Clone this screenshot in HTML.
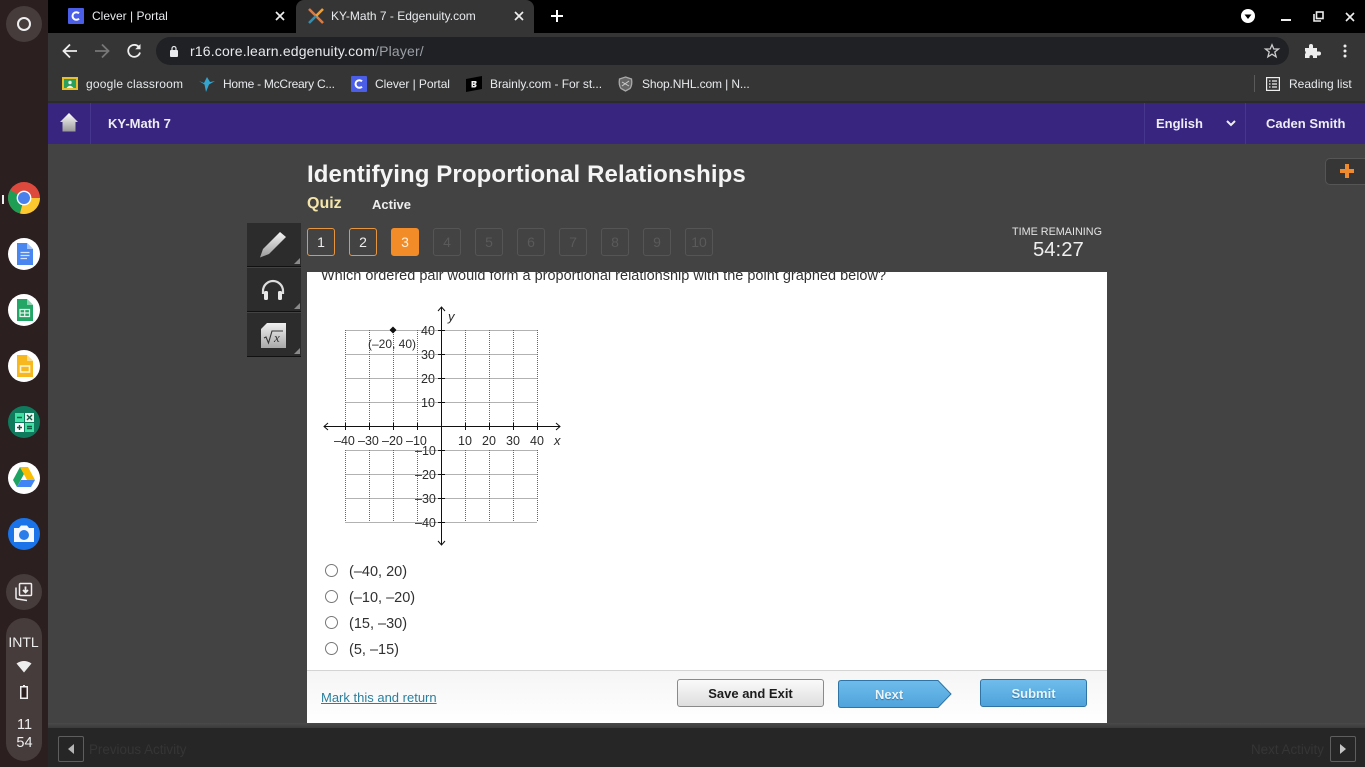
<!DOCTYPE html>
<html><head><meta charset="utf-8"><title>KY-Math 7 - Edgenuity.com</title>
<style>
html,body{margin:0;padding:0;width:1365px;height:767px;overflow:hidden;background:#434343;font-family:"Liberation Sans",sans-serif}
.a{position:absolute;white-space:nowrap}
svg{position:absolute;overflow:visible}
.t{font-size:12px;color:#e8eaed;top:77px;line-height:14px}
.n{position:absolute;top:228px;width:26px;height:26px;border:1px solid #555;border-radius:3px;text-align:center;line-height:26px;font-size:14px;color:#5a5a5a}
.on{border-color:#e8953f;color:#eee}
.opt{position:absolute;left:349px;font-size:14.5px;color:#303030;line-height:16px}
.rad{position:absolute;left:325px;width:11px;height:11px;border:1px solid #777;border-radius:50%;background:#fff}
.tool{position:absolute;left:247px;width:54px;height:43px;background:#2c2c2c;border-bottom:1px solid #111}
.tool:after{content:"";position:absolute;right:1px;bottom:2px;border-left:6px solid transparent;border-bottom:6px solid #8a8a8a}
</style></head><body>

<!-- shelf -->
<div class="a" style="left:0;top:0;width:48px;height:767px;background:#2b1f20"></div>
<div class="a" style="left:6px;top:6px;width:36px;height:36px;border-radius:50%;background:#473c3c"></div>
<div class="a" style="left:17px;top:17px;width:10px;height:10px;border:2px solid #eee;border-radius:50%"></div>
<div class="a" style="left:2px;top:195px;width:2px;height:9px;background:#eee"></div>
<svg style="left:8px;top:182px" width="32" height="32" viewBox="0 0 32 32">
<circle cx="16" cy="16" r="16" fill="#dd4a3d"/><path d="M16 16L2.2 8A16 16 0 0 0 12 31.5z" fill="#1e9e55"/><path d="M16 16H32A16 16 0 0 1 12 31.5z" fill="#fbc92f"/><circle cx="16" cy="16" r="7.4" fill="#fff"/><circle cx="16" cy="16" r="6" fill="#4a80ec"/></svg>
<svg style="left:8px;top:238px" width="32" height="32" viewBox="0 0 32 32"><circle cx="16" cy="16" r="16" fill="#fff"/><path d="M9 5H19L25 11V27H9Z" fill="#4a86f0"/><path d="M19 5L25 11H19Z" fill="#a4c3f8"/><path d="M12.500 14.500H21.500M12.500 17.500H21.500M12.500 20.500H19" stroke="#d5e3fb" stroke-width="1.200"/></svg>
<svg style="left:8px;top:294px" width="32" height="32" viewBox="0 0 32 32"><circle cx="16" cy="16" r="16" fill="#fff"/><path d="M9 5H19L25 11V27H9Z" fill="#23a566"/><path d="M19 5L25 11H19Z" fill="#8ed1b0"/><path d="M12 15.500H21.500V22.500H12ZM12 19H21.500M16.700 15.500V22.500" stroke="#e5f5ed" stroke-width="1.200" fill="none"/></svg>
<svg style="left:8px;top:350px" width="32" height="32" viewBox="0 0 32 32"><circle cx="16" cy="16" r="16" fill="#fff"/><path d="M9 5H19L25 11V27H9Z" fill="#f6b81e"/><path d="M19 5L25 11H19Z" fill="#fadc8e"/><rect x="12.500" y="16" width="9" height="6" fill="none" stroke="#fff3d0" stroke-width="1.600"/></svg>
<svg style="left:8px;top:406px" width="32" height="32" viewBox="0 0 32 32"><circle cx="16" cy="16" r="16" fill="#0f7a5c"/><rect x="7" y="7" width="9" height="9" fill="#3ee0a4"/><rect x="7" y="17" width="9" height="9" fill="#fff"/><rect x="17" y="7" width="9" height="9" fill="#e5f5ed"/><rect x="17" y="17" width="9" height="9" fill="#3ee0a4"/><path d="M9 11.500H14M19 9L24 14M24 9L19 14M9 21.500H14M11.500 19V24M19 20.500H24M19 22.500H24" stroke="#145a45" stroke-width="1.400"/></svg>
<svg style="left:8px;top:462px" width="32" height="32" viewBox="0 0 32 32"><circle cx="16" cy="16" r="16" fill="#fff"/><path d="M12 5L5 18L9 25L16 12Z" fill="#1ea362"/><path d="M12 5H20L27 18H19Z" fill="#fbbc04"/><path d="M9 25H23L27 18H13Z" fill="#4285f4"/></svg>
<svg style="left:8px;top:518px" width="32" height="32" viewBox="0 0 32 32"><circle cx="16" cy="16" r="16" fill="#1a73e8"/><path d="M6 10H11L13 7.500H19L21 10H26V24H6Z" fill="#f4f8fe"/><circle cx="16" cy="17" r="5" fill="#2b7de9"/></svg>
<div class="a" style="left:6px;top:574px;width:36px;height:36px;border-radius:50%;background:#473c3c"></div>
<svg style="left:14px;top:582px" width="20" height="20" viewBox="0 0 20 20" fill="none" stroke="#eee" stroke-width="1.500"><rect x="5.500" y="1.500" width="12" height="12" rx="1"/><path d="M2 5.500V15.500Q2 17 3.500 17L13 18.500"/><path d="M11.500 4.500V10.500M9 8L11.500 10.500L14 8" stroke-width="1.800"/></svg>
<div class="a" style="left:6px;top:618px;width:36px;height:143px;border-radius:18px;background:#473c3c"></div>
<div class="a" style="left:0;width:47px;text-align:center;top:635px;font-size:14px;color:#eee;line-height:15px">INTL</div>
<svg style="left:16px;top:660px" width="16" height="13" viewBox="0 0 16 13"><path d="M0.500 3.500Q8 -1.500 15.500 3.500L8 12.500Z" fill="#eee"/></svg>
<svg style="left:20px;top:685px" width="8" height="14" viewBox="0 0 8 14"><rect x="3" y="0" width="2" height="2" fill="#eee"/><rect x="0.750" y="1.750" width="6.500" height="11.500" fill="#2b1f20" stroke="#eee" stroke-width="1.500"/></svg>
<div class="a" style="left:0;width:49px;text-align:center;top:716px;font-size:14.5px;color:#eee;line-height:18px;white-space:normal">11<br>54</div>

<!-- tab strip -->
<div class="a" style="left:48px;top:0;width:1317px;height:33px;background:#000"></div>
<div class="a" style="left:296px;top:0;width:238px;height:33px;background:#353535;border-radius:8px 8px 0 0"></div>
<svg style="left:68px;top:8px" width="16" height="16" viewBox="0 0 16 16"><rect width="16" height="16" rx="1" fill="#4a5ee8"/><path d="M11 5.300A3.800 3.800 0 1 0 11 10.700" stroke="#fff" stroke-width="2" fill="none"/></svg>
<div class="a" style="left:92px;top:8px;font-size:12px;line-height:16px;color:#e8eaed">Clever | Portal</div>
<svg style="left:275px;top:11px" width="10" height="10" viewBox="0 0 10 10"><path d="M1 1L9 9M9 1L1 9" stroke="#eee" stroke-width="1.700"/></svg>
<svg style="left:308px;top:8px" width="16" height="16" viewBox="0 0 16 16" fill="none" stroke-width="2.600"><path d="M1 1L15 15" stroke="#e2793a"/><path d="M15 1L8 8" stroke="#e8a040"/><path d="M1 15L8 8" stroke="#3a8aa8"/></svg>
<div class="a" style="left:331px;top:8px;font-size:12px;line-height:16px;color:#e8eaed">KY-Math 7 - Edgenuity.com</div>
<svg style="left:514px;top:11px" width="10" height="10" viewBox="0 0 10 10"><path d="M1 1L9 9M9 1L1 9" stroke="#eee" stroke-width="1.700"/></svg>
<svg style="left:551px;top:10px" width="12" height="12" viewBox="0 0 12 12"><path d="M6 0V12M0 6H12" stroke="#fff" stroke-width="2"/></svg>
<svg style="left:1241px;top:9px" width="14" height="14" viewBox="0 0 14 14"><circle cx="7" cy="7" r="7" fill="#fff"/><path d="M3.500 5.500H10.500L7 10Z" fill="#000"/></svg>
<div class="a" style="left:1281px;top:19px;width:10px;height:2px;background:#eee"></div>
<svg style="left:1313px;top:11px" width="11" height="11" viewBox="0 0 11 11" fill="none" stroke="#eee" stroke-width="1.600"><path d="M1 3V10H8"/><rect x="3.500" y="1" width="6.500" height="6.500"/></svg>
<svg style="left:1345px;top:12px" width="10" height="10" viewBox="0 0 10 10"><path d="M1 1L9 9M9 1L1 9" stroke="#eee" stroke-width="1.600"/></svg>

<!-- toolbar -->
<div class="a" style="left:48px;top:33px;width:1317px;height:70px;background:#353535"></div>
<div class="a" style="left:156px;top:37px;width:1133px;height:28px;border-radius:14px;background:#202124"></div>
<svg style="left:62px;top:43px" width="16" height="16" viewBox="0 0 16 16" fill="none" stroke="#eee" stroke-width="1.800"><path d="M15 8H2M8 1.500L1.500 8L8 14.500"/></svg>
<svg style="left:94px;top:43px" width="16" height="16" viewBox="0 0 16 16" fill="none" stroke="#777" stroke-width="1.800"><path d="M1 8H14M8 1.500L14.500 8L8 14.500"/></svg>
<svg style="left:126px;top:43px" width="16" height="16" viewBox="0 0 16 16" fill="none" stroke="#eee" stroke-width="1.800"><path d="M13.500 5A6 6 0 1 0 14 9.500"/><path d="M14.500 1V6.300H9.200Z" fill="#eee" stroke="none"/></svg>
<svg style="left:169px;top:45px" width="10" height="12" viewBox="0 0 10 12"><rect x="1" y="5" width="8" height="7" rx="1" fill="#e8eaed"/><path d="M3 5V3.500A2 2 0 0 1 7 3.500V5" fill="none" stroke="#e8eaed" stroke-width="1.200"/></svg>
<div class="a" style="left:190px;top:43px;font-size:14px;line-height:16px;letter-spacing:.17px;color:#e8eaed">r16.core.learn.edgenuity.com<span style="color:#9aa0a6">/Player/</span></div>
<svg style="left:1264px;top:43px" width="16" height="16" viewBox="0 0 16 16"><path d="M8 1.800L9.800 6H14.500L10.800 9L12.100 13.800L8 11.200L3.900 13.800L5.200 9L1.500 6H6.200Z" fill="none" stroke="#ccc" stroke-width="1.300"/></svg>
<svg style="left:1304px;top:43px" width="16" height="16" viewBox="0 0 16 16"><path d="M1 5H5V3A2 2 0 0 1 9 3V5H13V8.500H15A2 2 0 0 1 15 12.500H13V15H9V13.500A1.800 1.800 0 0 0 5.500 13.500V15H1V11A2 2 0 0 0 1 8Z" fill="#eee"/></svg>
<svg style="left:1343px;top:44px" width="4" height="14" viewBox="0 0 4 14" fill="#eee"><circle cx="2" cy="2" r="1.500"/><circle cx="2" cy="7" r="1.500"/><circle cx="2" cy="12" r="1.500"/></svg>

<!-- bookmarks -->
<svg style="left:62px;top:76px" width="16" height="16" viewBox="0 0 16 16"><rect y="1" width="16" height="13" fill="#e8c02e"/><rect x="2" y="3" width="12" height="9" fill="#2ba05c"/><circle cx="8" cy="6.500" r="1.700" fill="#eee"/><path d="M4.500 12Q8 7.500 11.500 12Z" fill="#eee"/></svg>
<div class="a t" style="left:86px;letter-spacing:.2px">google classroom</div>
<svg style="left:198px;top:75px" width="18" height="18" viewBox="0 0 18 18"><path d="M1 6L6 8L9 2L12 7L17 6L11 9.500L8 17L6.500 9.500Z" fill="#35a5d0"/></svg>
<div class="a t" style="left:223px;letter-spacing:-.25px">Home - McCreary C...</div>
<svg style="left:351px;top:76px" width="16" height="16" viewBox="0 0 16 16"><rect width="16" height="16" rx="1" fill="#4a5ee8"/><path d="M11 5.300A3.800 3.800 0 1 0 11 10.700" stroke="#fff" stroke-width="2" fill="none"/></svg>
<div class="a t" style="left:375px;letter-spacing:-.06px">Clever | Portal</div>
<svg style="left:466px;top:76px" width="16" height="16" viewBox="0 0 16 16"><path d="M0 3L16 0V13L0 16Z" fill="#000"/><path d="M5.500 5H9.500Q11 5 10.500 7Q10 8 9 8Q11 8.500 10.500 10Q10 11.500 8.500 11.500H5.500ZM7 6.500V7.500H8.500V6.500ZM7 9V10H8.500V9Z" fill="#eee" fill-rule="evenodd"/></svg>
<div class="a t" style="left:490px;letter-spacing:-.05px">Brainly.com - For st...</div>
<svg style="left:618px;top:76px" width="15" height="16" viewBox="0 0 15 16"><path d="M7.500 1L13.500 3Q14.500 9 12 12.500L7.500 15L3 12.500Q0.500 9 1.500 3Z" fill="#666" stroke="#aaa" stroke-width="1.300"/><path d="M4 10L11 5M4 6L11 10" stroke="#ccc"/></svg>
<div class="a t" style="left:642px;letter-spacing:-.12px">Shop.NHL.com | N...</div>
<div class="a" style="left:1254px;top:75px;width:1px;height:17px;background:#5a5a5a"></div>
<svg style="left:1266px;top:77px" width="14" height="14" viewBox="0 0 14 14" fill="none" stroke="#eee" stroke-width="1.200"><rect x="0.600" y="0.600" width="12.800" height="12.800"/><path d="M3 4H4.500M6 4H11M3 7H4.500M6 7H11M3 10H4.500M6 10H11"/></svg>
<div class="a t" style="left:1289px">Reading list</div>

<!-- purple nav -->
<div class="a" style="left:48px;top:101px;width:1317px;height:2px;background:#2b2b2b"></div>
<div class="a" style="left:48px;top:103px;width:1317px;height:41px;background:#372580"></div>
<div class="a" style="left:90px;top:103px;width:1px;height:41px;background:#46378d"></div>
<div class="a" style="left:1144px;top:103px;width:1px;height:41px;background:#46378d"></div>
<div class="a" style="left:1245px;top:103px;width:1px;height:41px;background:#46378d"></div>
<svg style="left:60px;top:113px" width="18" height="19" viewBox="0 0 18 19"><defs><linearGradient id="h" x1="0" y1="0" x2="0" y2="1"><stop offset="0" stop-color="#fff"/><stop offset="1" stop-color="#999"/></linearGradient></defs><path d="M9 0L18 9H15.500V18.500H2.500V9H0Z" fill="url(#h)"/></svg>
<div class="a" style="left:108px;top:116px;font-size:13px;font-weight:bold;line-height:16px;color:#eeedf5">KY-Math 7</div>
<div class="a" style="left:1156px;top:116px;font-size:13px;font-weight:bold;line-height:16px;color:#eeedf5">English</div>
<svg style="left:1226px;top:120px" width="10" height="7" viewBox="0 0 10 7"><path d="M1 1L5 5L9 1" fill="none" stroke="#eee" stroke-width="2"/></svg>
<div class="a" style="left:1266px;top:116px;font-size:13px;font-weight:bold;line-height:16px;color:#eeedf5">Caden Smith</div>

<!-- plus tab -->
<div class="a" style="left:1325px;top:158px;width:40px;height:27px;box-sizing:border-box;background:#363636;border:1px solid #555;border-right:0;border-radius:5px 0 0 5px"></div>
<svg style="left:1340px;top:164px" width="14" height="14" viewBox="0 0 14 14"><path d="M5 0H9V5H14V9H9V14H5V9H0V5H5Z" fill="#ef8a2e"/></svg>

<!-- header -->
<div class="a" style="left:307px;top:160px;font-size:24px;font-weight:bold;line-height:29px;letter-spacing:.11px;color:#f5f5f5">Identifying Proportional Relationships</div>
<div class="a" style="left:307px;top:194px;font-size:16px;font-weight:bold;line-height:19px;color:#f3e5ab">Quiz</div>
<div class="a" style="left:372px;top:197px;font-size:13px;font-weight:bold;line-height:16px;color:#eee">Active</div>

<!-- numbers -->
<div class="n on" style="left:307px">1</div>
<div class="n on" style="left:349px">2</div>
<div class="n" style="left:391px;background:#f28c28;border-color:#f28c28;color:#fff0dc">3</div>
<div class="n" style="left:433px">4</div>
<div class="n" style="left:475px">5</div>
<div class="n" style="left:517px">6</div>
<div class="n" style="left:559px">7</div>
<div class="n" style="left:601px">8</div>
<div class="n" style="left:643px">9</div>
<div class="n" style="left:685px">10</div>

<!-- timer -->
<div class="a" style="left:1012px;top:225px;font-size:10.800px;line-height:14px;color:#e4e4e4">TIME REMAINING</div>
<div class="a" style="left:1033px;top:238px;font-size:20.300px;line-height:24px;color:#eee">54:27</div>

<!-- tools -->
<div class="tool" style="top:223px"></div>
<div class="tool" style="top:268px"></div>
<div class="tool" style="top:313px"></div>
<svg style="left:260px;top:232px" width="26" height="26" viewBox="0 0 26 26"><defs><linearGradient id="p" x1="0" y1="0" x2="0" y2="1"><stop offset="0" stop-color="#f5f5f5"/><stop offset="1" stop-color="#9a9a9a"/></linearGradient></defs><path d="M20 0L26 5L9 22L0 25.500L3 17Z" fill="url(#p)"/></svg>
<svg style="left:260px;top:279px" width="26" height="22" viewBox="0 0 26 22"><path d="M3 15V12A10 10 0 0 1 23 12V15" fill="none" stroke="#ddd" stroke-width="2.200"/><rect x="4" y="12" width="4" height="9" rx="1.500" fill="#e8e8e8"/><rect x="18" y="12" width="4" height="9" rx="1.500" fill="#e8e8e8"/></svg>
<div class="a" style="left:261px;top:323px;width:25px;height:25px;background:linear-gradient(#f0f0f0,#a8a8a8)"></div>
<div class="a" style="left:261px;top:323px;border-top:6px solid #2c2c2c;border-right:6px solid transparent"></div>
<svg style="left:261px;top:323px" width="25" height="25" viewBox="0 0 25 25"><path d="M3 15L5 14L7.500 20L11 8H22" fill="none" stroke="#333" stroke-width="1.100"/><text x="13" y="19" font-family="Liberation Serif" font-style="italic" font-size="13" fill="#333">x</text></svg>

<!-- content -->
<div class="a" style="left:307px;top:272px;width:800px;height:398px;background:#fff;overflow:hidden">
<div class="a" style="left:14px;top:-4px;font-size:14.500px;line-height:16px;color:#303030">Which ordered pair would form a proportional relationship with the point graphed below?</div>
</div>

<svg style="left:0;top:0" width="1365" height="767" font-family="Liberation Sans" font-size="12.500" fill="#2c2c2c">
<g fill="none" stroke="#666" stroke-width="1" stroke-dasharray="1 1">
<path d="M345.500 330.500H537.500M345.500 354.500H537.500M345.500 378.500H537.500M345.500 402.500H537.500M345.500 450.500H537.500M345.500 474.500H537.500M345.500 498.500H537.500M345.500 522.500H537.500"/>
<path d="M345.500 330V426M369.500 330V426M393.500 330V426M417.500 330V426M465.500 330V426M489.500 330V426M513.500 330V426M537.500 330V426M345.500 450V522M369.500 450V522M393.500 450V522M417.500 450V522M465.500 450V522M489.500 450V522M513.500 450V522M537.500 450V522"/>
</g>
<g fill="none" stroke="#111" stroke-width="1">
<path d="M324 426.500H560M441.500 307V545"/>
<path d="M328 423L324 426.500L328 430M556 423L560 426.500L556 430M438 311L441.500 307L445 311M438 541L441.500 545L445 541"/>
<path d="M345.500 423V430M369.500 423V430M393.500 423V430M417.500 423V430M465.500 423V430M489.500 423V430M513.500 423V430M537.500 423V430M438 330.500H445M438 354.500H445M438 378.500H445M438 402.500H445M438 450.500H445M438 474.500H445M438 498.500H445M438 522.500H445"/>
</g>
<path d="M393 326.500L396.500 330L393 333.500L389.500 330Z" fill="#111"/>
<g>
<text x="368" y="348" font-size="12">(–20, 40)</text>
<text x="421" y="335">40</text><text x="421" y="359">30</text><text x="421" y="383">20</text><text x="421" y="407">10</text>
<text x="415" y="455">–10</text><text x="415" y="479">–20</text><text x="415" y="503">–30</text><text x="415" y="527">–40</text>
<text x="334" y="445">–40</text><text x="358" y="445">–30</text><text x="382" y="445">–20</text><text x="406" y="445">–10</text>
<text x="458" y="445">10</text><text x="482" y="445">20</text><text x="506" y="445">30</text><text x="530" y="445">40</text>
<text x="448" y="321" font-style="italic" font-size="13">y</text>
<text x="554" y="445" font-style="italic" font-size="13">x</text>
</g>
</svg>

<div class="rad" style="top:564px"></div><div class="opt" style="top:564px">(–40, 20)</div>
<div class="rad" style="top:590px"></div><div class="opt" style="top:590px">(–10, –20)</div>
<div class="rad" style="top:616px"></div><div class="opt" style="top:616px">(15, –30)</div>
<div class="rad" style="top:642px"></div><div class="opt" style="top:642px">(5, –15)</div>

<!-- action bar -->
<div class="a" style="left:307px;top:670px;width:800px;height:53px;box-sizing:border-box;border-top:1px solid #d4d4d4;background:linear-gradient(#f5f5f5,#fff)"></div>
<div class="a" style="left:321px;top:690px;font-size:13px;line-height:16px;color:#2a7f9e;text-decoration:underline">Mark this and return</div>
<div class="a" style="left:677px;top:679px;width:147px;height:28px;box-sizing:border-box;border:1px solid #8a8a8a;border-radius:3px;background:linear-gradient(#fafafa,#dedede);text-align:center;font-size:13px;font-weight:bold;line-height:26px;padding-top:1px;color:#1c1c1c">Save and Exit</div>
<svg style="left:838px;top:680px" width="114" height="28" viewBox="0 0 114 28"><defs><linearGradient id="b" x1="0" y1="0" x2="0" y2="1"><stop offset="0" stop-color="#6fbcec"/><stop offset="1" stop-color="#4ea3db"/></linearGradient></defs><path d="M3 .5H100L113 14L100 27.500H3Q.5 27.500 .5 25V3Q.5 .5 3 .5Z" fill="url(#b)" stroke="#2f74a5"/></svg>
<div class="a" style="left:875px;top:687px;font-size:13px;font-weight:bold;line-height:16px;color:#e8f4fc;text-shadow:0 1px 1px #2f74a5">Next</div>
<div class="a" style="left:980px;top:679px;width:107px;height:28px;box-sizing:border-box;border:1px solid #2f74a5;border-radius:3px;background:linear-gradient(#6fbcec,#4ea3db);text-align:center;font-size:13px;font-weight:bold;line-height:28px;color:#e8f4fc;text-shadow:0 1px 1px #2f74a5">Submit</div>

<!-- footer -->
<div class="a" style="left:48px;top:723px;width:1317px;height:5px;background:linear-gradient(#4a4a4a,#3a3a3a)"></div>
<div class="a" style="left:48px;top:728px;width:1317px;height:39px;background:#262626"></div>
<div class="a" style="left:58px;top:736px;width:26px;height:26px;box-sizing:border-box;border:1px solid #5e5e5e;border-radius:2px"></div>
<svg style="left:67px;top:744px" width="8" height="10" viewBox="0 0 8 10"><path d="M7 0V10L1 5Z" fill="#b5b5b5"/></svg>
<div class="a" style="left:89px;top:742px;font-size:13.400px;line-height:16px;color:#353535">Previous Activity</div>
<div class="a" style="left:1251px;top:742px;font-size:13.400px;line-height:16px;color:#353535">Next Activity</div>
<div class="a" style="left:1330px;top:736px;width:26px;height:26px;box-sizing:border-box;border:1px solid #5e5e5e;border-radius:2px"></div>
<svg style="left:1339px;top:744px" width="8" height="10" viewBox="0 0 8 10"><path d="M1 0V10L7 5Z" fill="#c5c5c5"/></svg>

</body></html>
